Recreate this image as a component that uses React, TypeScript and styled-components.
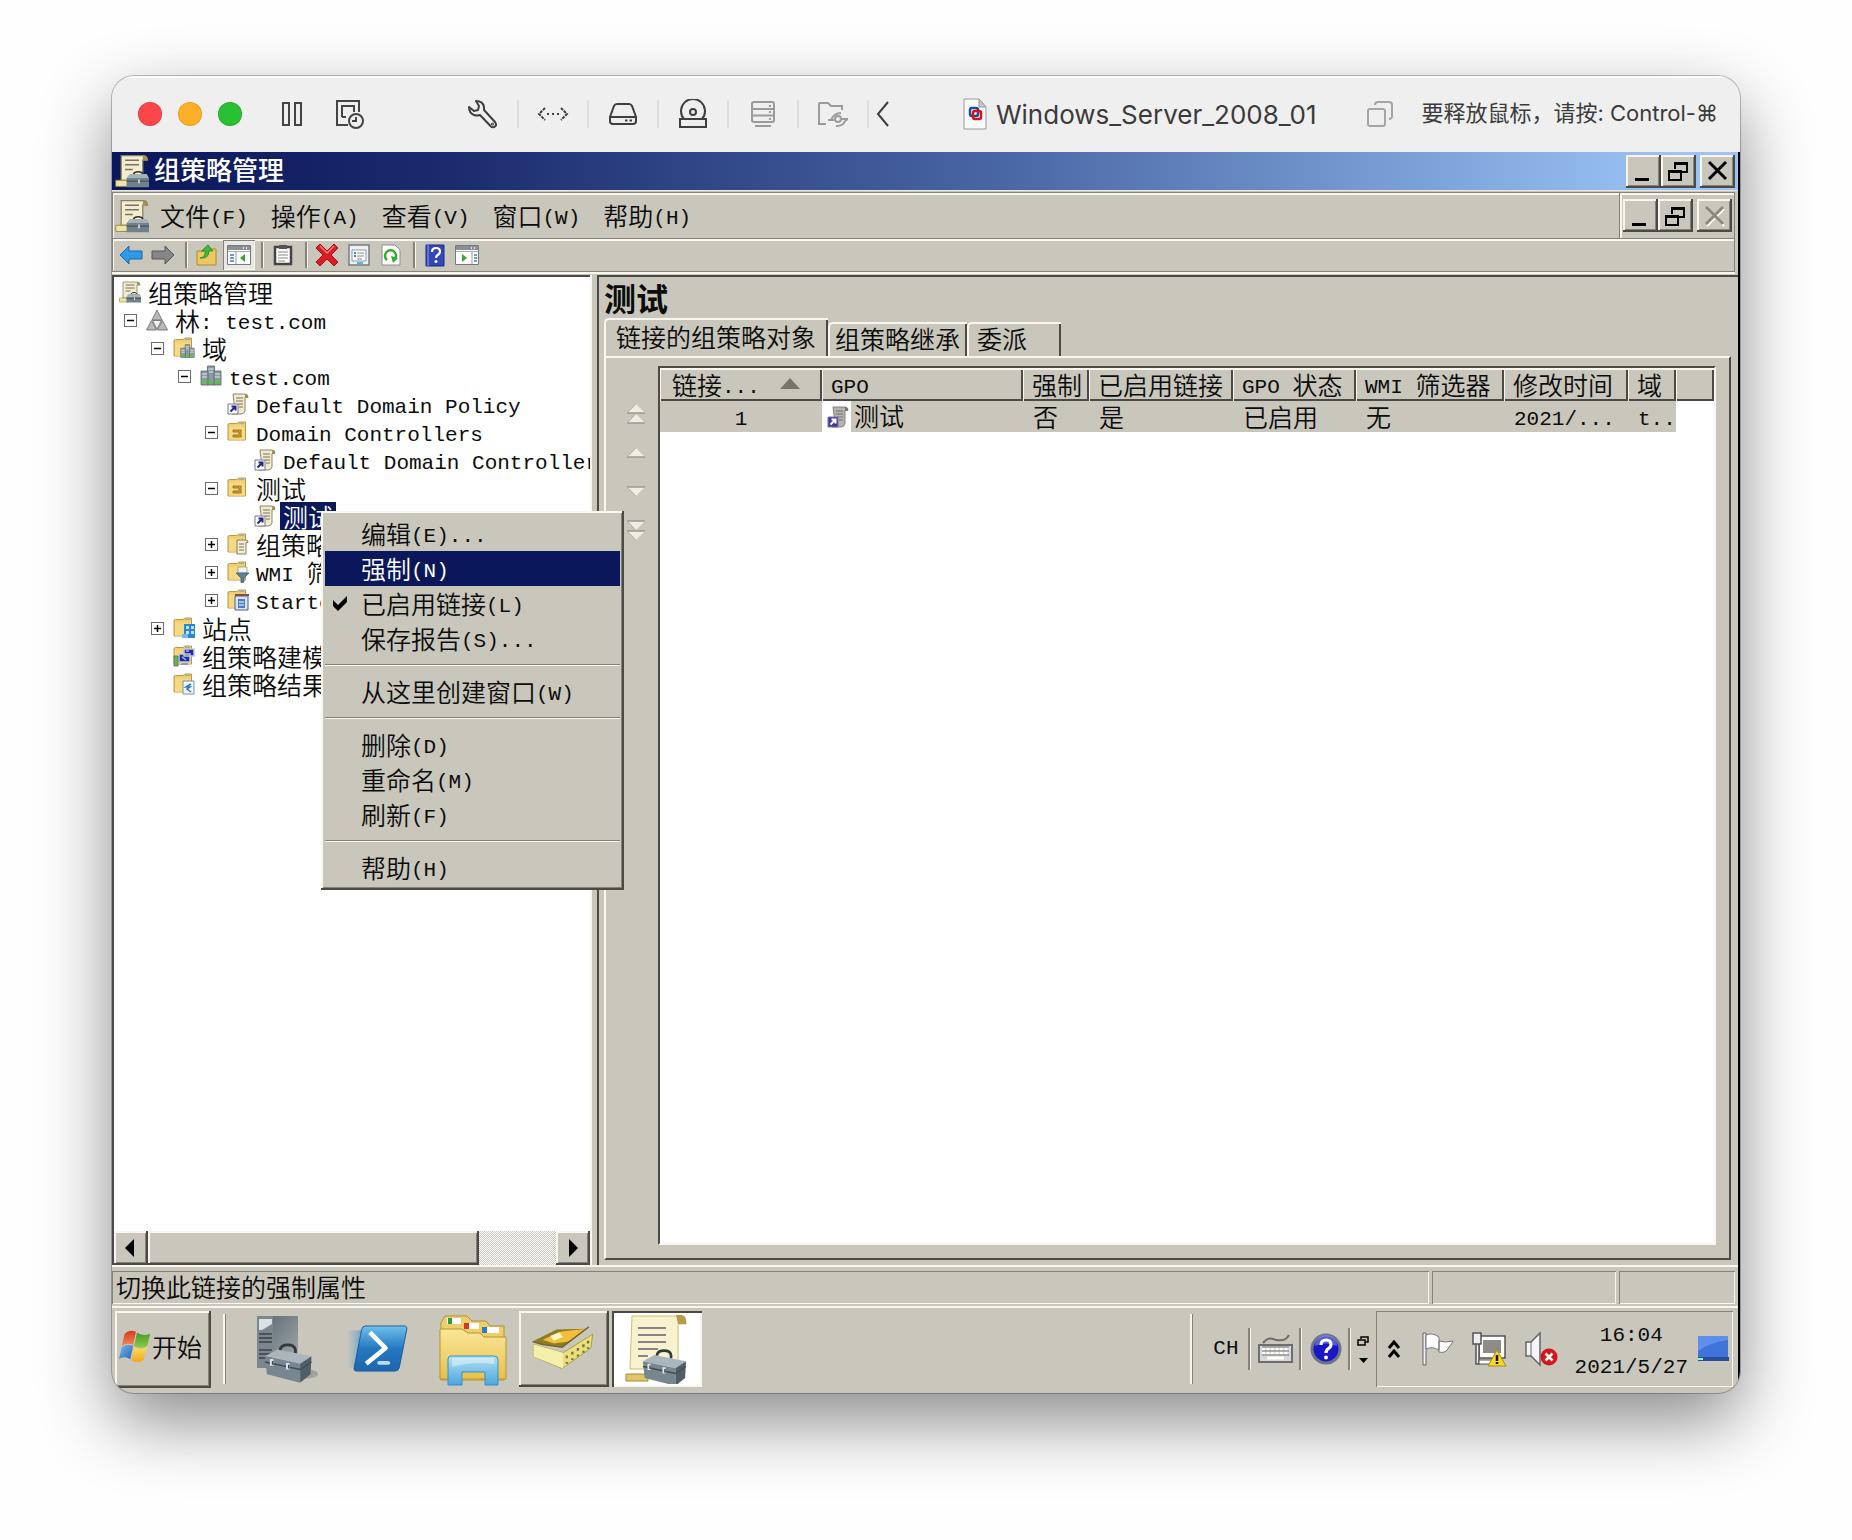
import React from 'react';
import styled, { createGlobalStyle, css } from 'styled-components';

const face = '#c9c6bb';
const light = '#f8f6ef';
const shade = '#858279';
const dark = '#4c4a46';
const navy = '#0a175a';

const Global = createGlobalStyle`
  * { box-sizing: border-box; }
  body { margin: 0; background: #fefefe; }
  button { font: inherit; color: inherit; margin: 0; padding: 0; border: 0; background: none; text-align: left; }
  ul { list-style: none; margin: 0; padding: 0; }
  svg { display: block; flex: none; }
`;

const raised = css`
  box-shadow: inset -2px -2px ${dark}, inset 2px 2px ${light}, inset -3px -3px ${shade};
`;
const sunken = css`
  box-shadow: inset 1px 1px ${shade}, inset -1px -1px ${light};
`;

const Page = styled.div`
  min-height: 100vh;
  padding: 76px 112px 147px;
  display: flex;
`;
const Machine = styled.div`
  flex: 1;
  min-width: 0;
  display: flex;
  flex-direction: column;
  border-radius: 22px;
  overflow: hidden;
  background: ${face};
  box-shadow: 0 0 0 1px rgba(0, 0, 0, 0.24), 0 28px 70px rgba(0, 0, 0, 0.46);
`;

/* host window bar */
const HostBar = styled.header`
  height: 76px;
  flex: none;
  display: flex;
  align-items: center;
  justify-content: space-between;
  padding: 0 22px 0 26px;
  background: #efefef;
  box-shadow: inset 0 2px #fafafa;
  color: #3b3b3b;
  font-family: Inter, 'Noto Sans CJK SC', 'DejaVu Sans', sans-serif;
  white-space: nowrap;
`;
const HostGroup = styled.div<{ $gap?: number }>`
  display: flex;
  align-items: center;
  gap: ${p => p.$gap ?? 0}px;
`;
const HostTools = styled(HostGroup)`
  margin-left: 31px;
`;
const Light = styled.button<{ $c: string }>`
  width: 24px;
  height: 24px;
  border-radius: 50%;
  background: ${p => p.$c};
  box-shadow: inset 0 0 0 1px rgba(0, 0, 0, 0.1);
`;
const HostTool = styled.button<{ $w?: number; $dim?: boolean }>`
  width: ${p => p.$w ?? 70}px;
  height: 28px;
  display: flex;
  align-items: center;
  justify-content: center;
  border-left: 2px solid #dedede;
  color: ${p => (p.$dim ? '#9b9b9b' : '#3f3f3f')};
  &:first-child { border-left-color: transparent; }
`;
const HostButton = styled.button`
  display: flex;
  color: #444;
`;
const HostTitle = styled.h1`
  margin: 0 0 0 15px;
  display: flex;
  align-items: center;
  gap: 9px;
  font-size: 26px;
  font-weight: 400;
`;
const Hint = styled.span`
  font-size: 22px;
  line-height: 28px;
  padding-bottom: 2px;
`;

/* guest desktop */
const Guest = styled.div`
  flex: 1;
  min-height: 0;
  display: flex;
  flex-direction: column;
  border-right: 2px solid #000;
  font-family: 'Noto Sans CJK SC', sans-serif;
  font-weight: 350;
  font-size: 25px;
  line-height: 28px;
  color: #0c0c0c;
  white-space: nowrap;
`;
const Mono = styled.span`
  font-family: 'Liberation Mono', monospace;
  font-size: 21px;
  line-height: 20px;
  vertical-align: 2px;
  white-space: pre;
`;
const TitleBar = styled.div`
  height: 38px;
  flex: none;
  display: flex;
  align-items: center;
  padding: 0 3px;
  gap: 5px;
  background: linear-gradient(90deg, ${navy} 0%, #1a2a6c 20%, #4a67a5 55%, #7ba0d6 80%, #9cc3f4 96%);
  color: #fff;
`;
const TitleText = styled.span`
  padding-bottom: 4px;
  font-size: 26px;
  font-weight: 500;
`;
const Grow = styled.div`
  flex: 1;
`;
const WinButtons = styled.div`
  display: flex;
  button:last-child { margin-left: 4px; }
`;
const WinButton = styled.button`
  width: 35px;
  height: 33px;
  background: ${face};
  display: flex;
  align-items: center;
  justify-content: center;
  ${raised}
`;
const Bars = styled.div`
  flex: none;
  border-top: 1px solid #e8e6dd;
  padding: 1px 3px 3px 0;
`;
const MenuBar = styled.nav`
  height: 46px;
  display: flex;
  align-items: center;
  border: 1px solid ${shade};
  border-bottom: 0;
  box-shadow: inset 1px 2px ${light};
`;
const MenuIcon = styled.div`
  width: 36px;
  padding-left: 2px;
`;
const MenuBarItem = styled.button`
  height: 34px;
  padding: 0 12px 2px 11px;
`;
const MdiButtons = styled.div`
  height: 100%;
  display: flex;
  align-items: center;
  padding: 0 2px 0 3px;
  border-left: 1px solid ${shade};
  box-shadow: inset 2px 0 ${light};
`;
const ToolBar = styled.div`
  height: 34px;
  display: flex;
  align-items: center;
  border: 1px solid ${shade};
  box-shadow: inset 1px 2px ${light}, 0 2px ${light};
  padding-left: 2px;
`;
const Tool = styled.button<{ $on?: boolean }>`
  width: 32px;
  height: 30px;
  display: flex;
  align-items: center;
  justify-content: center;
  ${p => p.$on && css`background: #e9e8e3; ${sunken}`}
`;
const ToolSep = styled.i`
  width: 3px;
  height: 26px;
  margin: 0 3px 0 6px;
  border-left: 2px solid ${shade};
  border-right: 1px solid ${light};
`;

const Body = styled.div`
  position: relative;
  flex: 1;
  min-height: 600px;
  display: flex;
  gap: 7px;
`;
const TreePane = styled.section`
  flex: 0 0 478px;
  display: flex;
  flex-direction: column;
  overflow: hidden;
  background: #fff;
  border: solid ${dark};
  border-width: 2px 0 0 2px;
  box-shadow: 2px 0 ${light};
`;
const Tree = styled.ul`
  flex: 1;
  padding-top: 1px;
  overflow: hidden;
`;
const Row = styled.li<{ $level: number; $leaf?: boolean }>`
  height: 28px;
  display: flex;
  align-items: center;
  padding-left: ${p => 5 + 27 * p.$level - (p.$leaf ? 0 : 22)}px;
`;
const Expander = styled.button`
  width: 13px;
  height: 13px;
  margin-right: 9px;
  border: 1px solid #6d6d6d;
  display: flex;
  align-items: center;
  justify-content: center;
`;
const NodeText = styled.span<{ $sel?: boolean }>`
  margin-left: 4px;
  padding: 0 3px;
  ${p => p.$sel && css`background: ${navy}; color: #fff;`}
`;
const Scroll = styled.div`
  flex: none;
  height: 34px;
  display: flex;
  background: conic-gradient(#fff 25%, ${face} 0 50%, #fff 0 75%, ${face} 0) 0 0 / 2px 2px;
`;
const ScrollButton = styled.button`
  width: 34px;
  padding-right: 3px;
  background: ${face};
  display: flex;
  align-items: center;
  justify-content: center;
  ${raised}
`;
const Thumb = styled.div`
  width: 331px;
  background: ${face};
  ${raised}
`;

const Detail = styled.section`
  flex: 1;
  min-width: 0;
  display: flex;
  flex-direction: column;
  padding: 0 7px 5px 5px;
  border: solid ${dark};
  border-width: 2px 0 0 2px;
`;
const DetailTitle = styled.h2`
  margin: 0;
  height: 41px;
  font-size: 32px;
  line-height: 41px;
  font-weight: 700;
`;
const Tabs = styled.div`
  display: flex;
  align-items: flex-end;
`;
const Tab = styled.button<{ $on?: boolean; $wide?: boolean }>`
  height: ${p => (p.$on ? 38 : 34)}px;
  padding: ${p => (p.$wide ? '0 34px 4px 8px' : p.$on ? '0 12px 4px 10px' : '0 7px 4px 5px')};
  border: solid ${light};
  border-width: 2px 0 0 2px;
  border-radius: 5px 0 0 0;
  box-shadow: inset -2px 0 ${dark};
`;
const TabPanel = styled.div`
  flex: 1;
  min-height: 0;
  display: flex;
  padding: 8px 13px 13px 0;
  border: 2px solid;
  border-color: ${light} ${dark} ${dark} ${light};
`;
const Order = styled.div`
  width: 52px;
  flex: none;
  display: flex;
  flex-direction: column;
  align-items: center;
  padding: 28px 0 0 8px;
`;
const OrderButton = styled.button`
  height: 39px;
  display: flex;
  align-items: center;
`;
const List = styled.div`
  flex: 1;
  min-width: 0;
  background: #fff;
  border: 2px solid;
  border-color: ${dark} ${light} ${light} ${dark};
  overflow: hidden;
`;
const Table = styled.table`
  width: 100%;
  table-layout: fixed;
  border-collapse: separate;
  border-spacing: 0;
  text-align: left;
`;
const Th = styled.th`
  height: 33px;
  padding: 0 0 2px 9px;
  font-weight: 350;
  background: ${face};
  box-shadow: inset 1px 2px ${light}, inset -2px -2px ${dark};
`;
const SortHead = styled.span`
  display: flex;
  align-items: center;
  gap: 20px;
  padding-left: 3px;
`;
const Td = styled.td<{ $center?: boolean; $blank?: boolean }>`
  height: 31px;
  padding: 0 0 2px ${p => (p.$center ? 0 : 10)}px;
  background: ${p => (p.$blank ? '#fff' : face)};
  text-align: ${p => (p.$center ? 'center' : 'left')};
`;
const GpoTd = styled(Td)`
  padding: 0;
`;
const GpoCell = styled.div`
  height: 31px;
  display: flex;
`;
const GpoIcon = styled.span`
  height: 31px;
  padding: 5px 2px 0 5px;
  background: #fff;
`;
const GpoName = styled.span`
  padding-left: 3px;
`;

const Popup = styled.div`
  position: absolute;
  top: 236px;
  left: 209px;
  width: 303px;
  padding: 5px 4px;
  background: ${face};
  ${raised}
`;
const PopupItem = styled.button<{ $on?: boolean }>`
  width: 100%;
  height: 35px;
  display: flex;
  align-items: center;
  padding-bottom: 2px;
  ${p => p.$on && css`background: ${navy}; color: #fff;`}
`;
const Mark = styled.span`
  width: 36px;
  padding-left: 6px;
`;
const Rule = styled.hr`
  height: 2px;
  margin: 8px 0;
  border: 0;
  background: linear-gradient(${shade} 50%, ${light} 50%);
`;

const StatusBar = styled.footer`
  flex: none;
  height: 43px;
  display: flex;
  gap: 3px;
  padding: 4px 3px 2px 0;
  border-top: 2px solid ${light};
  border-bottom: 2px solid ${light};
`;
const StatusCell = styled.div<{ $w?: number }>`
  ${p => (p.$w ? `width: ${p.$w}px;` : 'flex: 1;')}
  padding-left: 4px;
  line-height: 31px;
  ${sunken}
`;

const TaskBar = styled.div`
  flex: none;
  height: 85px;
  display: flex;
  align-items: center;
  padding: 0 5px 3px 3px;
`;
const Start = styled.button`
  width: 96px;
  height: 77px;
  display: flex;
  align-items: center;
  padding: 0 0 6px 3px;
  ${raised}
`;
const Grip = styled.i<{ $m: string; $h?: number }>`
  width: 3px;
  height: ${p => p.$h ?? 70}px;
  margin: ${p => p.$m};
  border-left: 2px solid ${p => (p.$h ? shade : light)};
  border-right: 1px solid ${p => (p.$h ? light : shade)};
`;
const Task = styled.button<{ $open?: boolean; $on?: boolean }>`
  width: ${p => (p.$open || p.$on ? 90 : 93)}px;
  height: 76px;
  display: flex;
  align-items: center;
  justify-content: center;
  ${p => p.$open && raised}
  ${p => p.$on && css`
    margin-left: 3px;
    background: #fff;
    box-shadow: inset 2px 2px ${dark}, inset -2px -2px ${light};
  `}
`;
const TrayButton = styled.button`
  display: flex;
  align-items: center;
`;
const LangTools = styled.div`
  display: flex;
  flex-direction: column;
  align-items: center;
  gap: 12px;
  width: 25px;
`;
const Tray = styled.div`
  height: 76px;
  display: flex;
  align-items: center;
  gap: 17px;
  padding: 0 4px 0 12px;
  ${sunken}
`;
const Clock = styled.time`
  padding-bottom: 3px;
  text-align: center;
  line-height: 32px;
`;
const ClockEnd = styled.div`
  display: flex;
  align-items: center;
  gap: 9px;
`;

/* Latin runs are set in a half-width face beside the full-width Chinese glyphs. */
const T = ({ children }: { children: string }) => (
  <>
    {children.split(/([\x20-\x7e]+)/).map((s, i) =>
      s ? (i % 2 ? <Mono key={i}>{s}</Mono> : <React.Fragment key={i}>{s}</React.Fragment>) : null,
    )}
  </>
);

/* ---------- icons ---------- */
const GpmIcon = ({ s = 22 }: { s?: number }) => (
  <svg width={s} height={s} viewBox="0 0 22 22">
    <path d="M4 1h14q3 0 3 3h-3v13H4z" fill="#f4edcb" stroke="#857f63" strokeWidth=".8" />
    <path d="M18 1q3 0 3 3h-3z" fill="#a8914c" />
    <path d="M6.500 4h9M6.500 7h9M6.500 10h5" stroke="#77716b" strokeWidth="1" />
    <path d="M.5 17h9v4h-9z" fill="#efe3a5" stroke="#958544" strokeWidth=".6" />
    <path d="M7.500 15.500H22v6H7.500z" fill="#71818a" />
    <path d="M7.500 15.500l2-2.500h11l1.500 2.500z" fill="#a5b3b9" />
    <path d="M12 13q.5-1.500 3-1.500t3 1.500" fill="none" stroke="#333" />
    <path d="M7.500 17.500H22" stroke="#47545c" strokeWidth=".8" />
    <path d="M15 16.500h1v2.500h-1z" fill="#dfe7ea" />
  </svg>
);
const LinkIcon = ({ sel }: { sel?: boolean }) => (
  <svg width="22" height="22" viewBox="0 0 22 22">
    <path d="M6 1h12q3 0 3 3.500h-3V18q-1 3-4 3H5q3-1 3-4z" fill={sel ? '#b7b4b4' : '#f3ecc9'} stroke="#7e7964" strokeWidth=".9" />
    <path d="M18 1q3 0 3 3.500h-3z" fill={sel ? '#77757a' : '#9f905a'} />
    <path d="M9 5h7M9 8h7M11 11h5M12 14h4" stroke="#77716b" />
    <path d="M1 11h10v10H1z" fill={sel ? '#3a3a9a' : '#fff'} stroke="#77779c" />
    <path d="M3.500 18.500l5-5M4.500 13.500h4v4" fill="none" stroke={sel ? '#fff' : '#26267e'} strokeWidth="2" />
  </svg>
);
const Folder = () => (
  <>
    <path d="M1 4q0-1.500 1.500-1.500H10l2-1.500h6.500V19H1z" fill="#f1cf70" stroke="#b88f34" strokeWidth=".9" />
    <path d="M2 5.500h16V19H2z" fill="#f7dd8c" opacity=".7" />
    <path d="M12 2.500h5" stroke="#8cb5c4" strokeWidth="1.200" />
  </>
);
const Towers = ({ small }: { small?: boolean }) => (
  <g transform={small ? 'translate(7 7) scale(.68)' : undefined}>
    {[[7.5, 1], [1, 6], [14, 6]].map(([x, y]) => (
      <g key={x}>
        <path d={`M${x} ${y}h7v${20 - y}h-7z`} fill="#8b9aa0" stroke="#56636b" strokeWidth=".8" />
        <path d={`M${x + 1} ${y + 3}h5M${x + 1} ${y + 6}h5`} stroke="#e1e9ec" strokeWidth="1.200" />
        <path d={`M${x + 2} 15h3v4h-3z`} fill="#4fc935" />
      </g>
    ))}
  </g>
);
const NodeIcon = ({ kind }: { kind: string }) => {
  if (kind === 'gpm') return <GpmIcon />;
  if (kind === 'link') return <LinkIcon />;
  return (
    <svg width="22" height="22" viewBox="0 0 22 22">
      {kind === 'forest' && (
        <g fill="#b9b9b9" stroke="#717171" strokeWidth=".9">
          <path d="M11 1l5 10H6z" />
          <path d="M5.500 11.500l5 9.500h-10z" />
          <path d="M16.500 11.500l5 9.500h-10z" />
          <path d="M6.500 11.500h9L11 20z" fill="#f2f2f2" />
        </g>
      )}
      {kind === 'tower' && <Towers />}
      {!['forest', 'tower'].includes(kind) && <Folder />}
      {kind === 'domains' && <Towers small />}
      {kind === 'ou' && <path d="M6 9h8v7H6v-2h6v-3H6z" fill="#d49e25" stroke="#8d6719" strokeWidth=".8" />}
      {kind === 'gpos' && (
        <>
          <path d="M10 7h9q2 0 2 2.500h-2V21h-9z" fill="#f6efd2" stroke="#827b5f" />
          <path d="M12 11h5M12 14h5M12 17h5" stroke="#77716b" />
        </>
      )}
      {kind === 'wmi' && (
        <>
          <path d="M11 6h9v6h-9z" fill="#f4f4ee" stroke="#888" strokeWidth=".7" />
          <path d="M9 12h13l-5 5v4l-3 1v-5z" fill="#5d8296" stroke="#36566a" strokeWidth=".7" />
        </>
      )}
      {kind === 'starter' && (
        <>
          <path d="M8 5h14v2H8z" fill="#8f4a36" />
          <path d="M8 7h13v14H8z" fill="#d8e4f3" stroke="#45658e" />
          <path d="M11 10h7v9h-7z" fill="#4e7fc1" />
          <path d="M12 13h5M12 16h5" stroke="#fff" />
        </>
      )}
      {kind === 'sites' && (
        <>
          <path d="M11 7h11v14H11z" fill="#2c86cf" />
          <path d="M13 9h3v3h-3zM18 9h3v3h-3zM13 14h3v3h-3zM18 14h3v3h-3z" fill="#b9e2fb" />
          <path d="M9 17h6v4H9z" fill="#78b9e8" />
        </>
      )}
      {kind === 'model' && (
        <>
          <path d="M11 4h10v7H11zM6 9h11v8H6z" fill="#1d2ba4" stroke="#c5c9d8" strokeWidth="1.500" />
          <path d="M13 6h3M9 12l4 3" stroke="#a3b7f3" strokeWidth="1.500" />
          <path d="M1 11h4v10H1z" fill="#5db852" stroke="#666" strokeWidth=".8" />
          <path d="M9 18h6v2H7z" fill="#999" />
        </>
      )}
      {kind === 'result' && (
        <>
          <path d="M10 8h11v13H10z" fill="#f2f7fb" stroke="#7d90a2" />
          <path d="M18 11l-5 3h4l-3 2 4 3" fill="none" stroke="#2c78b5" strokeWidth="1.500" />
        </>
      )}
    </svg>
  );
};

const Tri = ({ d, s = 14 }: { d: string; s?: number }) => (
  <svg width={s} height={s + 4} viewBox="0 0 14 18"><path d={d} fill="#000" /></svg>
);
const Minimize = () => (
  <svg width="24" height="24" viewBox="0 0 24 24"><path d="M3 19h14v3H3z" /></svg>
);
const Restore = () => (
  <svg width="24" height="24" viewBox="0 0 24 24" fill="none" stroke="#000" strokeWidth="2">
    <path d="M8 10V4h12v9h-6M8 5h12M2 12h12v9H2zM2 13h12" />
  </svg>
);
const Close = ({ dim }: { dim?: boolean }) => (
  <svg width="24" height="24" viewBox="0 0 24 24" fill="none" strokeWidth="3">
    {dim && <path d="M4 5l17 17M21 5L4 22" stroke="#fff" strokeWidth="2" />}
    <path d="M3 3l17 17M20 3L3 20" stroke={dim ? '#8b8880' : '#000'} />
  </svg>
);
const Arrow = ({ right }: { right?: boolean }) => (
  <svg width="24" height="20" viewBox="0 0 24 20">
    <path
      d={right ? 'M23 10L14 1v5H1v8h13v5z' : 'M1 10l9-9v5h13v8H10v5z'}
      fill={right ? '#868686' : '#2f9be8'}
      stroke={right ? '#565656' : '#1c67a6'}
    />
  </svg>
);
const PaneIcon = ({ right }: { right?: boolean }) => (
  <svg width="24" height="20" viewBox="0 0 24 20">
    <path d="M.5.500h23v19H.5z" fill="#fff" stroke="#77797c" />
    <path d="M1 1h22v4H1z" fill="#8a9097" />
    <path d="M16 3h1m2 0h1" stroke="#fff" strokeWidth="1.500" />
    <path d="M1 6.500h22" stroke="#aaa" />
    <path d={right ? 'M17 7v12' : 'M9 7v12'} stroke="#999" />
    <path d={right ? 'M19 10h3M19 13h3M19 16h3' : 'M3 10h4M3 13h4M3 16h4'} stroke="#3b7bc9" strokeWidth="1.500" />
    <path d={right ? 'M7 9l5 4-5 4z' : 'M18 9l-5 4 5 4z'} fill="#3aa52f" />
  </svg>
);
const UpFolder = () => (
  <svg width="22" height="22" viewBox="0 0 22 22">
    <path d="M1 7h7l2-2h10v16H1z" fill="#edc763" stroke="#b4882c" />
    <path d="M4 14q6-1 5-7H5.500L12 1l5 6h-4q0 8-9 7z" fill="#3fb838" stroke="#23852a" strokeWidth=".8" />
  </svg>
);
const Clipboard = () => (
  <svg width="20" height="22" viewBox="0 0 20 22">
    <path d="M2 3h16v17H2z" fill="#fff" stroke="#444" strokeWidth="2.500" />
    <path d="M6 1h8v4H6z" fill="#555" />
    <path d="M5 8h10M5 11h10M5 14h10M5 17h7" stroke="#888" />
  </svg>
);
const Cross = () => (
  <svg width="24" height="24" viewBox="0 0 24 24">
    <path d="M5 1l7 7 7-7 4 4-7 7 7 7-4 4-7-7-7 7-4-4 7-7-7-7z" fill="#dc1b22" stroke="#a80f16" />
    <path d="M5 3l7 7 7-7" stroke="#f37b7b" fill="none" strokeWidth="1.500" />
  </svg>
);
const Props = () => (
  <svg width="22" height="22" viewBox="0 0 22 22">
    <path d="M1 1h20v20H1z" fill="#eef1f3" stroke="#777b80" strokeWidth="1.500" />
    <path d="M4 6h14v11H4z" fill="#fff" stroke="#8a98a7" />
    <path d="M9 9h7M9 12h7M9 15h5" stroke="#888" />
    <path d="M6 9h2M6 12h2" stroke="#3c86d2" strokeWidth="2" />
    <path d="M9 19h6" stroke="#52b9e4" strokeWidth="2" />
  </svg>
);
const Refresh = () => (
  <svg width="20" height="22" viewBox="0 0 20 22">
    <path d="M1 1h13l5 5v15H1z" fill="#fff" stroke="#8d8d8d" />
    <path d="M6 16a5.500 5.500 0 1 1 7 0" fill="none" stroke="#36a836" strokeWidth="2.500" />
    <path d="M10 12l7 2-5 5z" fill="#36a836" />
  </svg>
);
const Book = () => (
  <svg width="20" height="23" viewBox="0 0 20 23">
    <path d="M1 1h18v21H1z" fill="#3347b8" stroke="#1c2b82" />
    <path d="M3 1v21" stroke="#6f80e0" strokeWidth="1.500" />
    <path d="M7 8q0-4 4-4t4 3.500q0 2-2 3.200T11 14" fill="none" stroke="#fff" strokeWidth="2.200" />
    <circle cx="11" cy="17.500" r="1.500" fill="#fff" />
  </svg>
);
const OrderArrow = ({ down, twice }: { down?: boolean; twice?: boolean }) => (
  <svg width="20" height="22" viewBox="0 0 20 22">
    {(twice ? [0, 10] : [5]).map(y => (
      <g key={y}>
        <path d={down ? `M1 ${y + 1}h18l-9 9z` : `M1 ${y + 10}h18l-9-9z`} fill="#efede8" />
        <path d={down ? `M1 ${y + 1}h18` : `M1 ${y + 10}h18`} stroke="#9b988f" strokeWidth="1.500" />
        <path d={down ? `M1 ${y + 1}l9 9` : `M1 ${y + 10}l9-9`} stroke="#aaa79f" strokeWidth=".8" />
      </g>
    ))}
  </svg>
);
const WinFlag = () => (
  <svg width="34" height="34" viewBox="0 0 34 36">
    <defs>
      <linearGradient id="fr" x1="0" x2="0" y1="0" y2="1"><stop stopColor="#d9381c" /><stop offset="1" stopColor="#f28a5c" /></linearGradient>
      <linearGradient id="fg" x1="0" x2="0" y1="0" y2="1"><stop stopColor="#4b9a2c" /><stop offset="1" stopColor="#8ccb45" /></linearGradient>
      <linearGradient id="fb" x1="0" x2="1" y1="0" y2="1"><stop stopColor="#86b8ea" /><stop offset="1" stopColor="#2262b4" /></linearGradient>
      <linearGradient id="fy" x1="0" x2="0" y1="0" y2="1"><stop stopColor="#fbdc5c" /><stop offset="1" stopColor="#f2a61e" /></linearGradient>
    </defs>
    <path d="M6 5q5-5 12-2l-3 14q-6-3-12 1z" fill="url(#fr)" />
    <path d="M19 4q6 4 14 1l-3 13q-6 4-14 0z" fill="url(#fg)" />
    <path d="M3 19q6-4 12-1l-3 14Q6 28 0 32z" fill="url(#fb)" />
    <path d="M16 19q7 4 14 0l-4 14q-6 4-13 0z" fill="url(#fy)" />
  </svg>
);
const Toolbox = ({ x, y, k = 1 }: { x: number; y: number; k?: number }) => (
  <g transform={`translate(${x} ${y}) scale(${k})`}>
    <path d="M17 11V8q1-5 8-5t8 5v4" fill="none" stroke="#33393d" strokeWidth="3" />
    <path d="M1 15L14 8l36 7-12 8z" fill="#a9b6bd" />
    <path d="M1 15l37 8v20L3 34z" fill="#76878f" />
    <path d="M38 23l12-8-1 19-11 9z" fill="#4f5f68" />
    <path d="M1 21l37 8 12-8" fill="none" stroke="#3f4c54" strokeWidth="1.500" />
    <path d="M8 18v7M25 22v7" stroke="#dfe6e9" strokeWidth="3.500" />
    <path d="M9 20v4M26 24v4" stroke="#444" strokeWidth="1.500" />
  </g>
);
const ServerIcon = () => (
  <svg width="66" height="70" viewBox="0 0 66 70">
    <defs>
      <linearGradient id="sv" x1="0" x2="1" y1="0" y2="1"><stop stopColor="#5a646a" /><stop offset="1" stopColor="#a4adb1" /></linearGradient>
    </defs>
    <path d="M3 2h41v52H17L3 54z" fill="url(#sv)" />
    <path d="M3 2h16v52H3z" fill="#7b878d" />
    <path d="M5 5h13v5l-10 6H5z" fill="#d8e2e7" />
    <path d="M5 20h13M5 24h13M5 28h13M5 36h13M5 40h13M5 44h13" stroke="#39444a" strokeWidth="1.500" />
    <ellipse cx="50" cy="60" rx="14" ry="5" fill="#000" opacity=".18" />
    <Toolbox x={10} y={28} k={0.95} />
  </svg>
);
const PowerShell = () => (
  <svg width="70" height="52" viewBox="0 0 76 56">
    <defs>
      <linearGradient id="ps" x1="0" x2="0" y1="0" y2="1"><stop stopColor="#6fc0ec" /><stop offset=".5" stopColor="#2478c0" /><stop offset="1" stopColor="#1e66ae" /></linearGradient>
      <linearGradient id="pf"><stop stopColor="#5fa9dd" stopOpacity="0" /><stop offset="1" stopColor="#3b88c4" stopOpacity=".7" /></linearGradient>
    </defs>
    <path d="M2 8h18l-6 40H2z" fill="url(#pf)" />
    <path d="M22 3h42q4 0 3 4l-8 41q-1 4-5 4H13q-4 0-3-4l8-41q1-4 4-4z" fill="url(#ps)" stroke="#1b5793" />
    <path d="M27 10l17 17-21 17" fill="none" stroke="#fff" strokeWidth="5" strokeLinejoin="round" />
    <path d="M37 43h10" stroke="#b9dcf4" strokeWidth="4" strokeLinecap="round" />
  </svg>
);
const Explorer = () => (
  <svg width="68" height="76" viewBox="0 0 68 76">
    <defs>
      <linearGradient id="ex" x1="0" x2="0" y1="0" y2="1"><stop stopColor="#f9e79a" /><stop offset="1" stopColor="#e8c04c" /></linearGradient>
      <linearGradient id="eb" x1="0" x2="0" y1="0" y2="1"><stop stopColor="#b4e1f2" /><stop offset="1" stopColor="#4aa6dc" /></linearGradient>
    </defs>
    <path d="M2 12l4-7h22l5 5h14l4 5h14v54H2z" fill="#efce6a" stroke="#b28f30" />
    <path d="M8 7h14v6H8zM25 12h15v6H25zM43 16h17v6H43z" fill="#fff" />
    <path d="M9 7h4v6H9z" fill="#2f9a45" />
    <path d="M25 12h5v6h-5z" fill="#cf3a26" />
    <path d="M43 16h5v6h-5z" fill="#2b7fc5" />
    <path d="M1 18h22l6 4h12l4 4h22v42H1z" fill="url(#ex)" stroke="#b8922f" />
    <path d="M9 48q0-3 3-3h43q4 0 4 4v25H46V61H23v13H9z" fill="url(#eb)" stroke="#3a8fc4" />
    <path d="M13 47h42v6q-21-3-42 3z" fill="#fff" opacity=".4" />
  </svg>
);
const Briefcase = () => (
  <svg width="70" height="50" viewBox="0 0 70 54">
    <path d="M2 22l32 9 32-20-2 15-31 22L2 35z" fill="#eadf7c" stroke="#a39b3c" />
    <path d="M2 22l32 9v17L2 35z" fill="#f5efac" />
    <path d="M1 19l10 3 22 3L60 5 27 6z" fill="#8f7a26" />
    <path d="M12 17l20-9 28-3-20 14-16 2z" fill="#f3bf39" />
    <path d="M20 13l10-4 4 5-10 4z" fill="#fff4c5" />
    <path d="M1 19l10 3 22 3L62 3" fill="none" stroke="#6a652a" strokeWidth="1.500" />
    <path d="M38 34v3M38 41v2M44 30v3M44 37v2M50 26v3M50 33v2M56 22v3M56 29v2M61 18v3M61 25v2" stroke="#77713a" strokeWidth="2.500" />
  </svg>
);
const GpmTask = () => (
  <svg width="66" height="70" viewBox="0 0 66 70">
    <path d="M8 2h48q6 0 6 8h-8v45H6z" fill="#f9f2cf" stroke="#d0bd74" />
    <path d="M52 1h6q5 1 4 9h-8z" fill="#b79a4a" />
    <path d="M14 14h28M14 21h28M14 28h28M14 35h20M14 42h10" stroke="#8d8088" strokeWidth="2" />
    <path d="M2 60h22v7H2z" fill="#e3c567" stroke="#a98a32" />
    <Toolbox x={18} y={34} k={0.88} />
  </svg>
);
const HelpBall = () => (
  <svg width="32" height="32" viewBox="0 0 32 32">
    <circle cx="16" cy="16" r="14" fill="#1717c4" stroke="#6f7388" strokeWidth="3" />
    <path d="M5 13a11 11 0 0 1 22 0q-11-5-22 0z" fill="#7f8bf0" opacity=".6" />
    <path d="M11 12q0-5 5-5t5 4.500q0 2.500-2.500 4T16 20" fill="none" stroke="#fff" strokeWidth="3.200" />
    <circle cx="16" cy="24.500" r="2" fill="#fff" />
  </svg>
);
const Keyboard = () => (
  <svg width="35" height="30" viewBox="0 0 35 30" fill="none" stroke="#6e6e6e">
    <path d="M5 9q5-6 10-4t9 1q4 0 7-5" strokeWidth="2" />
    <path d="M1 11h33v17H1z" fill="#d8d8d6" strokeWidth="2" />
    <path d="M4 15h27M4 19h27" strokeWidth="3" strokeDasharray="3 1.500" stroke="#fff" />
    <path d="M4 17h27M4 21h27M4 13h27" strokeWidth="1" />
    <path d="M9 24h17" strokeWidth="3" stroke="#fff" />
  </svg>
);
const FlagIcon = () => (
  <svg width="34" height="36" viewBox="0 0 34 36">
    <path d="M3 2h3v32H3z" fill="#eee" stroke="#666" />
    <path d="M6 4q6-3 13 2v13q-7-4-13-1zM19 10q6 2 14 0-1 3-4 6-3 7-10 5z" fill="#fff" stroke="#777" />
  </svg>
);
const Network = () => (
  <svg width="36" height="36" viewBox="0 0 36 36">
    <path d="M8 5h26v22H8z" fill="#fff" stroke="#555" strokeWidth="1.500" />
    <path d="M12 9h18v13H12z" fill="#8d8c87" />
    <path d="M2 2h8v11H2zM5 13h3v20H5z" fill="#eee" stroke="#555" strokeWidth="1.500" />
    <path d="M8 29h14v4H8z" fill="#fff" stroke="#555" />
    <path d="M26 19l9 16H17z" fill="#f9d71c" stroke="#a98d0b" />
    <path d="M26 24v6M26 31v2" stroke="#111" strokeWidth="2.500" />
  </svg>
);
const Volume = () => (
  <svg width="34" height="36" viewBox="0 0 34 36">
    <path d="M2 11h5L16 2v32l-9-9H2z" fill="#f5f5f5" stroke="#666" strokeWidth="1.500" />
    <path d="M7 11v14" stroke="#666" />
    <circle cx="25" cy="26" r="8.500" fill="#d8141c" />
    <path d="M21.500 22.500l7 7M28.500 22.500l-7 7" stroke="#fff" strokeWidth="2.500" />
  </svg>
);
const DesktopIcon = () => (
  <svg width="32" height="28" viewBox="0 0 32 28">
    <path d="M1 1h30v22H1z" fill="#3f74d8" />
    <path d="M1 1h30v4Q14 7 1 16z" fill="#5f8fe8" />
    <path d="M1 22h31v4H1z" fill="#2a4f9a" />
    <path d="M1 24h5" stroke="#9ec" strokeWidth="2" />
  </svg>
);

const line = { fill: 'none', stroke: 'currentColor', strokeWidth: 2 } as const;

type Node = { level: number; text: string; icon: string; exp?: '+' | '-'; sel?: boolean };
const nodes: Node[] = [
  { level: 0, text: '组策略管理', icon: 'gpm' },
  { level: 1, text: '林: test.com', icon: 'forest', exp: '-' },
  { level: 2, text: '域', icon: 'domains', exp: '-' },
  { level: 3, text: 'test.com', icon: 'tower', exp: '-' },
  { level: 4, text: 'Default Domain Policy', icon: 'link' },
  { level: 4, text: 'Domain Controllers', icon: 'ou', exp: '-' },
  { level: 5, text: 'Default Domain Controllers Policy', icon: 'link' },
  { level: 4, text: '测试', icon: 'ou', exp: '-' },
  { level: 5, text: '测试', icon: 'link', sel: true },
  { level: 4, text: '组策略对象', icon: 'gpos', exp: '+' },
  { level: 4, text: 'WMI 筛选器', icon: 'wmi', exp: '+' },
  { level: 4, text: 'Starter GPO', icon: 'starter', exp: '+' },
  { level: 2, text: '站点', icon: 'sites', exp: '+' },
  { level: 2, text: '组策略建模', icon: 'model' },
  { level: 2, text: '组策略结果', icon: 'result' },
];
const menu = ['编辑(E)...', '强制(N)', '已启用链接(L)', '保存报告(S)...', '-', '从这里创建窗口(W)', '-', '删除(D)', '重命名(M)', '刷新(F)', '-', '帮助(H)'];
const columns = [162, 201, 66, 144, 123, 148, 124, 48];
const heads = ['GPO', '强制', '已启用链接', 'GPO 状态', 'WMI 筛选器', '修改时间', '域'];
const cells = ['否', '是', '已启用', '无', '2021/...', 't..'];

const Buttons = ({ dim }: { dim?: boolean }) => (
  <WinButtons>
    <WinButton aria-label="最小化"><Minimize /></WinButton>
    <WinButton aria-label="还原"><Restore /></WinButton>
    <WinButton aria-label="关闭"><Close dim={dim} /></WinButton>
  </WinButtons>
);

export default function App() {
  return (
    <Page>
      <Global />
      <Machine>
        <HostBar>
          <HostGroup $gap={35}>
            <HostGroup $gap={16}>
              <Light $c="#fc4648" aria-label="关闭" />
              <Light $c="#fdb027" aria-label="最小化" />
              <Light $c="#28c131" aria-label="缩放" />
            </HostGroup>
            <HostGroup $gap={28}>
              <HostButton aria-label="暂停">
                <svg width="30" height="28" viewBox="0 0 30 28" {...line}><path d="M6 3h6v22H6zM18 3h6v22h-6z" /></svg>
              </HostButton>
              <HostButton aria-label="快照">
                <svg width="30" height="30" viewBox="0 0 30 30" {...line}>
                  <path d="M13 26H2V2h22v11M7 18V7h12v6M7 18h4" /><circle cx="21" cy="22" r="7" /><path d="M21 18v4h-4" />
                </svg>
              </HostButton>
            </HostGroup>
          </HostGroup>
          <HostTools>
            <HostTool aria-label="设置">
              <svg width="30" height="30" viewBox="0 0 30 30" {...line} strokeLinejoin="round">
                <path d="M8 2q7 0 8 6 0 2 0 3L27 23q2 3 0 4.500t-4 0L12 16q-3 1-6 0-5-2-5-8l5 4 4-1 1-4z" /><circle cx="24.500" cy="25" r=".5" />
              </svg>
            </HostTool>
            <HostTool aria-label="网络">
              <svg width="32" height="16" viewBox="0 0 32 16" {...line}><path d="M8 2L2 8l6 6M24 2l6 6-6 6" strokeDasharray="3 1" /><path d="M10 8h2m3 0h2m3 0h2" /></svg>
            </HostTool>
            <HostTool aria-label="硬盘">
              <svg width="30" height="24" viewBox="0 0 30 24" {...line}>
                <path d="M2 15L6 4q1-2 3-2h12q2 0 3 2l4 11v4q0 3-3 3H5q-3 0-3-3zM2 15h26" /><path d="M17 18.500h2.500M21.500 18.500H24" />
              </svg>
            </HostTool>
            <HostTool aria-label="光盘">
              <svg width="30" height="30" viewBox="0 0 30 30" {...line}>
                <path d="M2 20h26v8H2zM6 20a12 12 0 1 1 18 0" /><circle cx="15" cy="13" r="3" />
              </svg>
            </HostTool>
            <HostTool aria-label="软盘" $dim>
              <svg width="26" height="26" viewBox="0 0 26 26" {...line}><rect x="2" y="1" width="22" height="20" rx="2" /><path d="M2 8h22M2 14.500h22M5 25h16M19 5h2M19 11h2M19 18h2" /></svg>
            </HostTool>
            <HostTool aria-label="共享文件夹" $dim>
              <svg width="32" height="26" viewBox="0 0 32 26" {...line}>
                <path d="M9 23H2V3q0-1 1-1h8l3 3h11v4M14 19q3-7 10-7M31 18q-3 1-4 4-2 3-8 3" /><circle cx="21" cy="18" r="3" /><path d="M11 19h6M25 18h6" />
              </svg>
            </HostTool>
            <HostTool $w={30} aria-label="收起">
              <svg width="14" height="26" viewBox="0 0 14 26" {...line}><path d="M12 1L2 13l10 12" /></svg>
            </HostTool>
          </HostTools>
          <HostTitle>
            <svg width="24" height="32" viewBox="0 0 24 32">
              <path d="M1 1h15l7 8v22H1z" fill="#fafafa" stroke="#999" />
              <path d="M16 1v8h7z" fill="#c9c9c9" stroke="#999" />
              <rect x="7" y="10" width="8" height="8" rx="2" fill="none" stroke="#1c4f97" strokeWidth="2.500" />
              <rect x="10" y="13" width="8" height="8" rx="2" fill="none" stroke="#d5131c" strokeWidth="2.500" />
            </svg>
            Windows_Server_2008_01
          </HostTitle>
          <HostGroup $gap={28}>
            <svg width="26" height="26" viewBox="0 0 26 26" fill="none" stroke="#a5a5a5" strokeWidth="2">
              <rect x="1" y="8" width="17" height="17" rx="2" /><path d="M8 4q0-3 3-3h11q3 0 3 3v11q0 3-3 3" />
            </svg>
            <Hint>要释放鼠标，请按: Control-⌘</Hint>
          </HostGroup>
        </HostBar>

        <Guest>
          <TitleBar>
            <GpmIcon s={34} />
            <TitleText>组策略管理</TitleText>
            <Grow />
            <Buttons />
          </TitleBar>
          <Bars>
            <MenuBar>
              <MenuIcon><GpmIcon s={34} /></MenuIcon>
              {['文件(F)', '操作(A)', '查看(V)', '窗口(W)', '帮助(H)'].map(t => (
                <MenuBarItem key={t}><T>{t}</T></MenuBarItem>
              ))}
              <Grow />
              <MdiButtons><Buttons dim /></MdiButtons>
            </MenuBar>
            <ToolBar>
              <Tool aria-label="后退"><Arrow /></Tool>
              <Tool aria-label="前进"><Arrow right /></Tool>
              <ToolSep />
              <Tool aria-label="上一级"><UpFolder /></Tool>
              <Tool $on aria-label="显示控制台树"><PaneIcon /></Tool>
              <ToolSep />
              <Tool aria-label="复制"><Clipboard /></Tool>
              <ToolSep />
              <Tool aria-label="删除"><Cross /></Tool>
              <Tool aria-label="属性"><Props /></Tool>
              <Tool aria-label="刷新"><Refresh /></Tool>
              <ToolSep />
              <Tool aria-label="帮助"><Book /></Tool>
              <Tool aria-label="操作窗格"><PaneIcon right /></Tool>
            </ToolBar>
          </Bars>

          <Body>
            <TreePane>
              <Tree role="tree">
                {nodes.map((n, i) => (
                  <Row key={i} role="treeitem" $level={n.level} $leaf={!n.exp}>
                    {n.exp && (
                      <Expander aria-label={n.exp === '-' ? '折叠' : '展开'}>
                        <svg width="9" height="9" viewBox="0 0 9 9">
                          <path d={n.exp === '-' ? 'M1 4.500h7' : 'M1 4.500h7M4.500 1v7'} stroke="#000" strokeWidth="1.500" />
                        </svg>
                      </Expander>
                    )}
                    <NodeIcon kind={n.icon} />
                    <NodeText $sel={n.sel}><T>{n.text}</T></NodeText>
                  </Row>
                ))}
              </Tree>
              <Scroll>
                <ScrollButton aria-label="向左滚动"><Tri d="M11 0v18L2 9z" /></ScrollButton>
                <Thumb />
                <Grow />
                <ScrollButton aria-label="向右滚动"><Tri d="M4 0v18l9-9z" /></ScrollButton>
              </Scroll>
            </TreePane>

            <Detail>
              <DetailTitle>测试</DetailTitle>
              <Tabs role="tablist">
                <Tab role="tab" $on aria-selected>链接的组策略对象</Tab>
                <Tab role="tab">组策略继承</Tab>
                <Tab role="tab" $wide>委派</Tab>
              </Tabs>
              <TabPanel role="tabpanel">
                <Order>
                  <OrderButton aria-label="移到顶部"><OrderArrow twice /></OrderButton>
                  <OrderButton aria-label="上移"><OrderArrow /></OrderButton>
                  <OrderButton aria-label="下移"><OrderArrow down /></OrderButton>
                  <OrderButton aria-label="移到底部"><OrderArrow down twice /></OrderButton>
                </Order>
                <List>
                  <Table>
                    <colgroup>
                      {columns.map((w, i) => <col key={i} width={w} />)}
                      <col />
                    </colgroup>
                    <thead>
                      <tr>
                        <Th>
                          <SortHead>
                            <span><T>链接...</T></span>
                            <svg width="20" height="11" viewBox="0 0 20 11"><path d="M10 0l10 11H0z" fill="#77746e" /></svg>
                          </SortHead>
                        </Th>
                        {heads.map(h => <Th key={h}><T>{h}</T></Th>)}
                        <Th />
                      </tr>
                    </thead>
                    <tbody>
                      <tr>
                        <Td $center><T>1</T></Td>
                        <GpoTd>
                          <GpoCell>
                            <GpoIcon><LinkIcon sel /></GpoIcon>
                            <GpoName>测试</GpoName>
                          </GpoCell>
                        </GpoTd>
                        {cells.map(c => <Td key={c}><T>{c}</T></Td>)}
                        <Td $blank />
                      </tr>
                    </tbody>
                  </Table>
                </List>
              </TabPanel>
            </Detail>

            <Popup role="menu">
              {menu.map((m, i) =>
                m === '-' ? (
                  <Rule key={i} />
                ) : (
                  <PopupItem key={i} role="menuitem" $on={i === 1}>
                    <Mark>
                      {i === 2 && (
                        <svg width="18" height="18" viewBox="0 0 18 18"><path d="M2 6l5 5 9-9v6l-9 9-5-5z" /></svg>
                      )}
                    </Mark>
                    <span><T>{m}</T></span>
                  </PopupItem>
                ),
              )}
            </Popup>
          </Body>

          <StatusBar>
            <StatusCell>切换此链接的强制属性</StatusCell>
            <StatusCell $w={184} />
            <StatusCell $w={116} />
          </StatusBar>

          <TaskBar>
            <Start><WinFlag />开始</Start>
            <Grip $m="0 14px 0 12px" />
            <Task aria-label="服务器管理器"><ServerIcon /></Task>
            <Task aria-label="PowerShell"><PowerShell /></Task>
            <Task aria-label="资源管理器"><Explorer /></Task>
            <Task $open aria-label="控制台"><Briefcase /></Task>
            <Task $on aria-label="组策略管理"><GpmTask /></Task>
            <Grow />
            <Grip $m="0 20px 0 0" />
            <TrayButton><T>CH</T></TrayButton>
            <Grip $h={42} $m="0 7px 0 9px" />
            <TrayButton aria-label="键盘"><Keyboard /></TrayButton>
            <Grip $h={42} $m="0 8px 0 6px" />
            <TrayButton aria-label="帮助"><HelpBall /></TrayButton>
            <Grip $h={42} $m="0 0 0 6px" />
            <LangTools>
              <svg width="12" height="10" viewBox="0 0 12 10" fill="none" stroke="#000" strokeWidth="1.500"><path d="M4 3V1h7v5H8M1 4h7v5H1z" /></svg>
              <svg width="9" height="5" viewBox="0 0 9 5"><path d="M0 0h9L4.500 5z" /></svg>
            </LangTools>
            <Tray>
              <TrayButton aria-label="显示隐藏的图标">
                <svg width="15" height="20" viewBox="0 0 15 20" fill="none" stroke="#000" strokeWidth="3"><path d="M1 9l5-6 5 6M1 18l5-6 5 6" /></svg>
              </TrayButton>
              <TrayButton aria-label="操作中心"><FlagIcon /></TrayButton>
              <TrayButton aria-label="网络"><Network /></TrayButton>
              <TrayButton aria-label="音量"><Volume /></TrayButton>
              <ClockEnd>
                <Clock><T>16:04</T><br /><T>2021/5/27</T></Clock>
                <DesktopIcon />
              </ClockEnd>
            </Tray>
          </TaskBar>
        </Guest>
      </Machine>
    </Page>
  );
}
